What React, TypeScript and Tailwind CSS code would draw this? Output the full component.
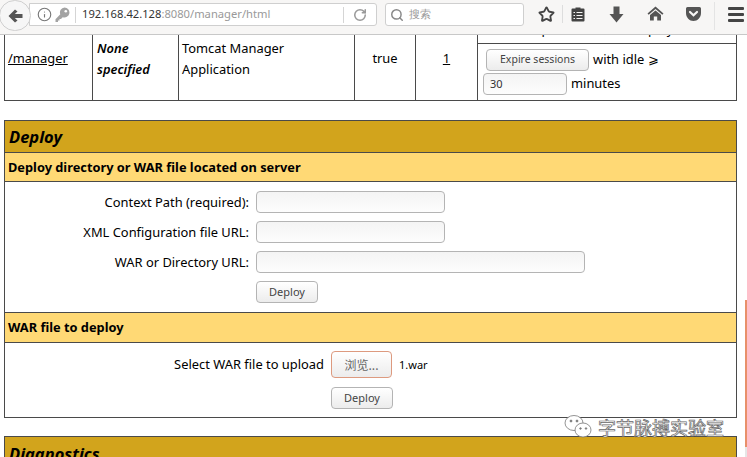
import React from 'react';
import { Info, RotateCw, Search, Star } from 'lucide-react';

const inputClass =
  'h-[22px] rounded-[4px] border border-[#b4b4b4] bg-gradient-to-b from-[#f4f4f4] to-[#fdfdfd]';
const buttonClass =
  'h-[22px] rounded-[4px] border border-[#b4b4b4] bg-gradient-to-b from-white to-[#ececec] text-[#444]';

function Toolbar() {
  return (
    <div className="relative flex h-[35px] items-start border-b border-[#c8c8c8] bg-[#f7f6f5]">
      <div className="z-10 -ml-[1px] flex h-[31px] w-[32px] items-center justify-center rounded-full border border-[#cfcfcf] bg-[#f6f6f6]">
        <svg className="h-[14px] w-[15px]" viewBox="0 0 15 14">
          <path d="M7 0.500L0.500 7 7 13.500 9.500 11.500 6.800 9H14.500V5H6.800L9.500 2.500z" fill="#555" />
        </svg>
      </div>
      <div className="-ml-[2px] mt-[3px] flex h-[23px] w-[348px] items-center rounded-r-[3px] border border-[#cfcfcf] bg-white pl-[7px]">
        <Info className="h-[15px] w-[15px] text-[#777]" strokeWidth={1.8} />
        <svg className="ml-[3px] h-[15px] w-[15px]" viewBox="0 0 15 15">
          <path d="M9.500 0.500a5 5 0 1 1-1.800 9.700L6 12H4.500v1.500H3V15H0.500v-2.800L5.300 7.300a5 5 0 0 1 4.200-6.800z" fill="#a3a3a3" />
          <circle cx="10.800" cy="4.200" r="1.300" fill="#fff" />
        </svg>
        <div className="ml-[5px] h-[16px] w-px bg-[#d5d5d5]" />
        <span className="ml-[6px] text-[11.200px] text-[#333]">
          192.168.42.128<span className="text-[#999]">:8080/manager/html</span>
        </span>
        <div className="ml-auto flex items-center">
          <div className="h-[16px] w-px bg-[#d5d5d5]" />
          <RotateCw className="mx-[9px] h-[14px] w-[14px] text-[#999]" strokeWidth={2.6} />
        </div>
      </div>
      <div className="ml-[8px] mt-[3px] flex h-[23px] w-[139px] items-center rounded-[3px] border border-[#cfcfcf] bg-white pl-[4px]">
        <Search className="h-[14px] w-[14px] text-[#888]" strokeWidth={2.500} />
        <span className="ml-[5px] text-[11px] text-[#999]">搜索</span>
      </div>
      <Star className="ml-[14px] mt-[6px] h-[17px] w-[17px] text-[#444]" strokeWidth={2.600} />
      <div className="ml-[7px] mt-[5px] h-[18px] w-px bg-[#ddd]" />
      <svg className="ml-[8px] mt-[6px] h-[16px] w-[14px]" viewBox="0 0 14 16">
        <path d="M1.500 2.500H4.500V1.500H9.500V2.500H12.500A1 1 0 0 1 13.500 3.500V14.500A1 1 0 0 1 12.500 15.500H1.500A1 1 0 0 1 0.500 14.500V3.500A1 1 0 0 1 1.500 2.500z" fill="#444" />
        <path d="M2.500 6.500h1.500M5.500 6.500h6M2.500 9.500h1.500M5.500 9.500h6M2.500 12.500h1.500M5.500 12.500h6" stroke="#f7f6f5" strokeWidth="1.200" />
      </svg>
      <svg className="ml-[24px] mt-[6px] h-[17px] w-[15px]" viewBox="0 0 15 17">
        <path d="M4.500 0.500H10.500V8H14.500L7.500 16.500 0.500 8H4.500z" fill="#555" />
      </svg>
      <svg className="ml-[23px] mt-[6px] h-[15px] w-[17px]" viewBox="0 0 17 15">
        <path d="M8.500 0.500L16.500 7.500 15.300 8.800 8.500 3 1.700 8.800 0.500 7.500z" fill="#555" />
        <path d="M8.500 4.500L14 9V14.500H10.200V10.500H6.800V14.500H3V9z" fill="#555" />
      </svg>
      <svg className="ml-[21px] mt-[6px] h-[16px] w-[17px]" viewBox="0 0 17 16">
        <path d="M1 2.500A1.500 1.500 0 0 1 2.500 1h12A1.500 1.500 0 0 1 16 2.500V7c0 4.500-3.500 8-7.500 8S1 11.500 1 7z" fill="#555" />
        <path d="M5 6l3.500 3.300L12 6" fill="none" stroke="#f7f6f5" strokeWidth="2.200" strokeLinecap="round" />
      </svg>
      <div className="ml-[12px] mt-[2px] h-[28px] w-px bg-[#e4e4e4]" />
      <div className="ml-[13px] mt-[7px] flex w-[16px] flex-col gap-[3px]">
        <div className="h-[3px] rounded-[1px] bg-[#444]" />
        <div className="h-[3px] rounded-[1px] bg-[#444]" />
        <div className="h-[3px] rounded-[1px] bg-[#444]" />
      </div>
    </div>
  );
}

function ManagerRow() {
  return (
    <div className="ml-[4px] flex h-[66px] w-[733px] border-b border-l border-[#4a4a4a] text-[12.900px] text-black">
      <div className="w-[88px] border-r border-[#4a4a4a] pl-[3px] pt-[14px]">
        <span className="underline">/manager</span>
      </div>
      <div className="w-[86px] border-r border-[#4a4a4a] pl-[4px] pt-[3px] font-semibold italic leading-[21px]">
        None
        <br />
        specified
      </div>
      <div className="w-[176px] border-r border-[#4a4a4a] pl-[3px] pt-[3px] leading-[21px]">
        Tomcat Manager
        <br />
        Application
      </div>
      <div className="w-[61px] border-r border-[#4a4a4a] pt-[14px] text-center">true</div>
      <div className="w-[62px] border-r border-[#4a4a4a] pt-[14px] text-center underline">1</div>
      <div className="flex flex-1 flex-col border-r border-[#4a4a4a]">
        <div className="h-[9px] overflow-hidden border-b border-[#4a4a4a]">
          <div className="-mt-[15px] flex leading-[18px]">
            <span className="ml-[44px]">Stop</span>
            <span className="ml-[66px]">Undeploy</span>
          </div>
        </div>
        <div className="flex items-center pl-[8px] pt-[5px]">
          <button className={`${buttonClass} w-[103px] text-[10.500px]`}>Expire sessions</button>
          <span className="ml-[4px]">with idle ⩾</span>
        </div>
        <div className="flex items-center pl-[5px] pt-[2px]">
          <div className={`${inputClass} w-[84px] pl-[6px] text-[11px] leading-[20px] text-[#333]`}>30</div>
          <span className="ml-[4px]">minutes</span>
        </div>
      </div>
    </div>
  );
}

function FormRow({ label, wide }: { label: string; wide?: boolean }) {
  return (
    <div className="flex h-[30px] items-center">
      <div className="w-[244px] pt-[2px] text-right">{label}</div>
      <div className={`${inputClass} ml-[7px] ${wide ? 'w-[329px]' : 'w-[189px]'}`} />
    </div>
  );
}

function DeploySection() {
  return (
    <div className="ml-[4px] mt-[19px] w-[733px] border border-[#4a4a4a] text-[12.900px] text-black">
      <div className="flex h-[31px] items-center bg-[#d2a41c] pl-[4px] pt-[1px] text-[16.500px] font-bold italic">Deploy</div>
      <div className="flex h-[30px] items-center border-y border-[#4a4a4a] bg-[#ffd975] pl-[3px] pt-[2px] text-[12.800px] font-bold">
        Deploy directory or WAR file located on server
      </div>
      <div className="h-[130px] pt-[5px]">
        <FormRow label="Context Path (required):" />
        <FormRow label="XML Configuration file URL:" />
        <FormRow label="WAR or Directory URL:" wide />
        <div className="flex h-[30px] items-center">
          <button className={`${buttonClass} ml-[251px] w-[62px] pt-[1px] text-[11px]`}>Deploy</button>
        </div>
      </div>
      <div className="flex h-[31px] items-center border-y border-[#4a4a4a] bg-[#ffd975] pl-[3px] pt-[1px] text-[12.800px] font-bold">
        WAR file to deploy
      </div>
      <div className="h-[74px]">
        <div className="flex h-[43px] items-center">
          <div className="w-[319px] pt-[1px] text-right">Select WAR file to upload</div>
          <button className={`${buttonClass} ml-[7px] h-[27px] w-[61px] border-[#dd9a7f] font-['Noto_Sans_CJK_SC',sans-serif] text-[12px] text-[#666]`}>
            浏览...
          </button>
          <span className="ml-[7px] pt-[1px] text-[11px]">1.war</span>
        </div>
        <button className={`${buttonClass} ml-[326px] mt-[1px] w-[62px] pt-[1px] text-[11px]`}>Deploy</button>
      </div>
    </div>
  );
}

function DiagnosticsSection() {
  return (
    <div className="ml-[4px] mt-[18px] w-[733px] border-x border-t border-[#4a4a4a]">
      <div className="flex h-[31px] items-center bg-[#d2a41c] pl-[4px] pt-[3px] text-[16.500px] font-bold italic text-black">
        Diagnostics
      </div>
    </div>
  );
}

function Watermark() {
  return (
    <div className="absolute left-[563px] top-[414px] flex items-center">
      <svg className="h-[26px] w-[30px]" viewBox="0 0 30 26" fill="white" stroke="#777" strokeWidth="0.800">
        <ellipse cx="11" cy="9" rx="9" ry="7.500" />
        <ellipse cx="20" cy="16" rx="8" ry="7" />
        <circle cx="8" cy="7" r="1" fill="#777" />
        <circle cx="14" cy="7" r="1" fill="#777" />
        <circle cx="17.500" cy="14.500" r="0.800" fill="#777" />
        <circle cx="23" cy="14.500" r="0.800" fill="#777" />
      </svg>
      <span className="ml-[5px] font-['Noto_Sans_CJK_SC',sans-serif] text-[18px] leading-[24px] text-white [-webkit-text-stroke:0.7px_#666]">
        字节脉搏实验室
      </span>
    </div>
  );
}

export default function App() {
  return (
    <div className="relative h-[457px] w-[747px] overflow-hidden bg-white font-['Noto_Sans','Liberation_Sans',sans-serif]">
      <Toolbar />
      <ManagerRow />
      <DeploySection />
      <DiagnosticsSection />
      <Watermark />
      <div className="absolute right-0 top-[300px] h-[147px] w-[2px] bg-[#e8906a]" />
      <div className="absolute bottom-0 right-0 h-[10px] w-[2px] bg-[#e6e6e6]" />
    </div>
  );
}
